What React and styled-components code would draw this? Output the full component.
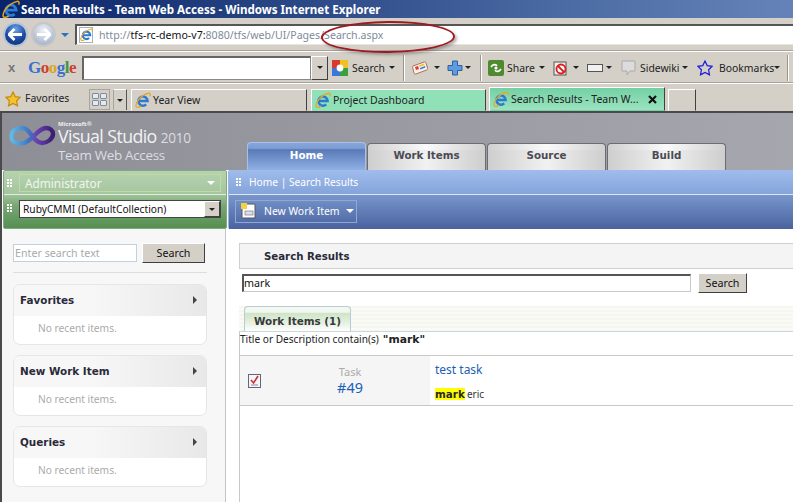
import styled, { createGlobalStyle } from "styled-components";

const Global = createGlobalStyle`
  html, body { margin: 0; padding: 0; background: #fff; }
  body { width: 793px; height: 502px; overflow: hidden; font-family: "Noto Sans", "Liberation Sans", sans-serif; font-size: 10.4px; color: #222; }
  * { box-sizing: border-box; }
`;

const Window = styled.div`
  position: relative;
  width: 793px;
  height: 502px;
  overflow: hidden;
  display: flex;
  flex-direction: column;
`;

/* title bar */
const TitleBar = styled.div`
  height: 18px;
  display: flex;
  align-items: center;
  gap: 1px;
  padding-left: 2px;
  background: linear-gradient(90deg, #0a246a 0%, #23407f 30%, #4a6aa3 70%, #6583b8 100%);
  color: #fff;
  font: bold 11.6px "Noto Sans", sans-serif;
  white-space: nowrap;
`;

/* address row */
const AddressRow = styled.div`
  height: 34px;
  background: #d4d0c8;
  border-bottom: 1px solid #fff;
  box-shadow: inset 0 -1px 0 #a8a49c;
  display: flex;
  align-items: center;
  padding: 0 0 0 3px;
`;
const NavButton = styled.div`
  width: 25px;
  height: 25px;
  flex: none;
  border-radius: 50%;
  margin-left: ${(p) => p.$ml || 0}px;
  display: flex;
  align-items: center;
  justify-content: center;
  background: ${(p) => p.$off
    ? "radial-gradient(circle at 50% 30%, #eef1f7, #a9b5cc 80%)"
    : "radial-gradient(circle at 50% 25%, #6ea2e4, #1a49a0 55%, #12306f 90%)"};
  border: 2px solid ${(p) => (p.$off ? "#c6c6c6" : "#b4c2da")};
`;
const DropArrow = styled.div`
  width: 0;
  height: 0;
  margin: ${(p) => p.$m || "0 0 0 4px"};
  border-left: ${(p) => p.$w || 3}px solid transparent;
  border-right: ${(p) => p.$w || 3}px solid transparent;
  border-top: ${(p) => p.$w || 3}px solid ${(p) => p.$c || "#222"};
  flex: none;
`;
const AddressField = styled.div`
  flex: 1;
  height: 21px;
  margin-left: 6px;
  margin-bottom: 1px;
  background: #fff;
  border-top: 2px solid #555;
  border-left: 2px solid #555;
  border-bottom: 1px solid #e8e6e0;
  display: flex;
  align-items: center;
  padding-left: 2px;
  white-space: nowrap;
  font-size: 10.6px;
  color: #7f8a9a;
`;
const PageIcon = styled.div`
  width: 14px;
  height: 16px;
  margin-right: 6px;
  border: 1px solid #a8b0bc;
  display: flex;
  align-items: center;
  justify-content: center;
  flex: none;
`;
const Host = styled.span`
  color: #111;
`;
const Annotation = styled.div`
  position: absolute;
  left: 321px;
  top: 21px;
  width: 134px;
  height: 32px;
  border: 2px solid #a01820;
  border-radius: 50%;
  box-shadow: 2px 2px 3px rgba(80, 80, 80, 0.45);
  transform: rotate(-0.5deg);
`;

/* google toolbar */
const GoogleRow = styled.div`
  height: 32px;
  background: #d4d0c8;
  border-bottom: 1px solid #fff;
  box-shadow: inset 0 -1px 0 #a8a49c;
  display: flex;
  align-items: center;
  padding-left: 8px;
  white-space: nowrap;
  color: #222;
  font-size: 10.4px;
`;
const CloseX = styled.span`
  width: 20px;
  flex: none;
  color: #777;
  font: bold 13px "Liberation Sans", sans-serif;
`;
const GoogleLogo = styled.span`
  width: 54px;
  flex: none;
  font: bold 17px "Liberation Serif", serif;
  letter-spacing: -0.5px;
`;
const GoogleLetter = styled.span`
  color: ${(p) => p.$c};
`;
const GoogleInput = styled.div`
  width: 229px;
  height: 24px;
  flex: none;
  background: #fff;
  border: 1px solid #888;
  border-top: 2px solid #666;
  border-left: 2px solid #666;
`;
const ComboButton = styled.div`
  width: ${(p) => p.$w}px;
  height: ${(p) => p.$h}px;
  background: #d4d0c8;
  border: 1px solid;
  border-color: #fff #404040 #404040 #fff;
  display: flex;
  align-items: center;
  justify-content: center;
  flex: none;
`;
const ToolLabel = styled.span`
  flex: none;
  width: ${(p) => p.$w}px;
  margin-left: ${(p) => p.$ml || 4}px;
`;
const ToolIcon = styled.svg`
  flex: none;
  margin-left: ${(p) => p.$ml || 0}px;
`;
const ToolSep = styled.div`
  width: 1px;
  height: 26px;
  background: #9a968e;
  box-shadow: 1px 0 0 #fff;
  margin-left: ${(p) => p.$ml}px;
  flex: none;
`;

/* tab row */
const TabRow = styled.div`
  height: 29px;
  background: #d4d0c8;
  border-bottom: 2px solid #4a4a4a;
  display: flex;
  align-items: flex-end;
  padding-left: 5px;
  white-space: nowrap;
`;
const FavStar = styled.div`
  align-self: center;
  margin-top: 2px;
  display: flex;
  flex: none;
`;
const FavLabel = styled.span`
  align-self: center;
  margin: 0 0 0 4px;
  width: 64px;
  flex: none;
`;
const GridButton = styled.div`
  align-self: center;
  width: 21px;
  height: 21px;
  margin-top: 4px;
  flex: none;
  border: 1px solid #a8a49c;
  display: grid;
  grid-template-columns: 7px 7px;
  grid-template-rows: 6px 6px;
  gap: 1px;
  justify-content: center;
  align-content: center;
`;
const GridCell = styled.i`
  display: block;
  background: #e4e8f0;
  border: 1px solid #7f8a9a;
  border-radius: 1px;
`;
const ListButton = styled.div`
  align-self: center;
  width: 14px;
  height: 21px;
  margin: 4px 0 0 3px;
  flex: none;
  border-right: 1px solid #555;
  border-left: 1px solid #a8a49c;
  border-top: 1px solid #fff;
  display: flex;
  align-items: center;
  justify-content: center;
`;
const BrowserTab = styled.div`
  width: ${(p) => p.$w}px;
  height: ${(p) => (p.$active ? 24 : 22)}px;
  margin-left: ${(p) => p.$ml}px;
  padding-left: 3px;
  flex: none;
  display: flex;
  align-items: center;
  gap: 2px;
  border: 1px solid;
  border-color: #fff #404040 transparent #fff;
  background: ${(p) => p.$bg};
  font-size: 10.5px;
  color: #222;
`;
const TabClose = styled.svg`
  margin-left: auto;
  margin-right: 7px;
  flex: none;
`;

/* page header */
const PageHead = styled.div`
  height: 57px;
  background: linear-gradient(90deg, #8e8e96, #a6a6ae);
  border-left: 2px solid #4a4a4a;
  display: flex;
  justify-content: space-between;
  position: relative;
`;
const LogoBlock = styled.div`
  display: flex;
  padding: 8px 0 0 7px;
  color: #f2f2f4;
  width: 245px;
  flex: none;
`;
const LogoMark = styled.svg`
  flex: none;
  margin: 4px 2px 0 0;
`;
const LogoText = styled.div`
  font-family: "Open Sans", sans-serif;
  display: flex;
  flex-direction: column;
`;
const LogoSmall = styled.div`
  font: bold 6px/7px "Open Sans", sans-serif;
`;
const LogoBig = styled.div`
  font: 400 17.8px/17px "Open Sans", sans-serif;
  letter-spacing: -0.6px;
  white-space: nowrap;
`;
const LogoYear = styled.span`
  font-size: 13.6px;
  letter-spacing: -0.3px;
  margin-left: 4px;
  color: #dcdce0;
`;
const LogoSub = styled.div`
  font: 400 13.4px/18px "Open Sans", sans-serif;
  letter-spacing: -0.3px;
  color: #dedee2;
  white-space: nowrap;
`;
const NavTabs = styled.div`
  flex: 1;
  display: flex;
  align-items: flex-end;
  gap: 1px;
`;
const NavTab = styled.div`
  width: 119px;
  height: ${(p) => (p.$active ? 28 : 27)}px;
  border-radius: 4px 4px 0 0;
  border: 1px solid ${(p) => (p.$active ? "#a9c1e8" : "#6c6c72")};
  border-bottom: none;
  display: flex;
  align-items: center;
  justify-content: center;
  padding-bottom: 4px;
  font: bold 10.3px "DejaVu Sans", sans-serif;
  color: ${(p) => (p.$active ? "#fff" : "#4b4b55")};
  background: ${(p) => p.$active
    ? "linear-gradient(180deg, #86a6db 0%, #7c9cd4 20%, #5a7ab8 25%, #8fb0e4 100%)"
    : "linear-gradient(90deg, rgba(205,205,205,.9), rgba(255,255,255,.65) 50%, rgba(205,205,205,.9)), linear-gradient(180deg, #f0f0f0 0 25%, #d6d6d6 25% 100%)"};
`;

/* command panels */
const Panels = styled.div`
  display: flex;
  height: 59px;
  border-left: 2px solid #4a4a4a;
`;
const GreenPanel = styled.div`
  width: 224px;
  margin-left: 1px;
  flex: none;
  display: flex;
  flex-direction: column;
  border: 1px solid #7fa97f;
  background: linear-gradient(180deg, #b6d2b0 0%, #a4c69e 40%, #79a774 60%, #558f52 100%);
  border-radius: 2px;
`;
const GreenTop = styled.div`
  height: 24px;
  display: flex;
  align-items: center;
  padding-left: 3px;
  border-bottom: 1px solid #e1ecdc;
`;
const GreenBottom = styled.div`
  flex: 1;
  display: flex;
  padding: 5px 0 0 3px;
`;
const Grip = styled.div`
  width: 5px;
  height: 8px;
  flex: none;
  margin-top: ${(p) => p.$mt || 0}px;
  background-image: radial-gradient(circle at 1px 1px, #fff 1px, transparent 1px);
  background-size: 3px 3px;
`;
const UserBox = styled.div`
  width: 202px;
  height: 18px;
  margin-left: 7px;
  border: 1px solid #c2d8a8;
  display: flex;
  align-items: center;
  justify-content: space-between;
  padding: 0 5px;
  color: #f0f7ea;
  font-size: 11.8px;
`;
const Select = styled.div`
  width: 202px;
  height: 18px;
  margin-left: 7px;
  background: #fff;
  border: 1px solid #444;
  display: flex;
  align-items: center;
  justify-content: space-between;
  padding-left: 3px;
  font-size: 10.2px;
  color: #111;
  white-space: nowrap;
`;
const BluePanel = styled.div`
  flex: 1;
  margin-left: 1px;
  display: flex;
  flex-direction: column;
  border-radius: 2px 0 0 2px;
  border-left: 1px solid #9ab4e0;
  box-shadow: inset 0 -1px 0 #39528a;
`;
const Crumbs = styled.div`
  height: 25px;
  display: flex;
  align-items: center;
  padding-left: 7px;
  color: #fff;
  font-size: 10.2px;
  background: linear-gradient(180deg, #a0bced, #84a4da);
  border-bottom: 1px solid #dfe7f5;
`;
const CrumbText = styled.span`
  margin-left: 8px;
`;
const CommandBar = styled.div`
  flex: 1;
  display: flex;
  align-items: center;
  padding-left: 6px;
  background: linear-gradient(180deg, #7896cc, #4a639f);
`;
const NewButton = styled.div`
  width: 122px;
  height: 23px;
  margin-top: -2px;
  border: 1px solid #8fa8d8;
  display: flex;
  align-items: center;
  color: #fff;
  font-size: 10.4px;
  padding-left: 5px;
  gap: 8px;
  white-space: nowrap;
`;

/* content */
const Body = styled.div`
  flex: 1;
  display: flex;
  border-left: 2px solid #4a4a4a;
  min-height: 0;
`;
const Sidebar = styled.div`
  width: 224px;
  flex: none;
  background: #f7f7f7;
  border-right: 1px solid #c4c4c4;
  padding: 14px 0 0 11px;
`;
const SearchLine = styled.div`
  display: flex;
  align-items: center;
  height: 20px;
  margin-bottom: 9px;
`;
const SearchBox = styled.div`
  width: 124px;
  height: 18px;
  flex: none;
  background: #fff;
  border: 1px solid #c0d0e0;
  color: #aaa;
  font-size: 10.7px;
  line-height: 16px;
  padding-left: 1px;
`;
const SearchButton = styled.div`
  width: ${(p) => p.$w}px;
  height: 20px;
  margin-left: ${(p) => p.$ml}px;
  background: #d4d0c8;
  border: 1px solid;
  border-color: #fff #404040 #404040 #fff;
  display: flex;
  align-items: center;
  justify-content: center;
  font-size: 10.7px;
  color: #111;
  flex: none;
`;
const SideRule = styled.div`
  width: 194px;
  height: 1px;
  background: #dedede;
  margin-bottom: 11px;
`;
const Card = styled.div`
  width: 194px;
  height: 61px;
  margin-bottom: 10px;
  background: #fff;
  border: 1px solid #e6e6e6;
  border-radius: 7px;
  overflow: hidden;
`;
const CardHead = styled.div`
  height: 31px;
  display: flex;
  align-items: center;
  justify-content: space-between;
  padding: 0 9px 2px 6px;
  background: linear-gradient(90deg, #f7f7f7 40%, #e8e8e8 100%);
  font: bold 10.4px "DejaVu Sans", sans-serif;
  color: #2a2a3a;
`;
const CardArrow = styled.div`
  width: 0;
  height: 0;
  border-top: 4px solid transparent;
  border-bottom: 4px solid transparent;
  border-left: 4px solid #444;
`;
const CardBody = styled.div`
  padding: 5px 0 0 24px;
  color: #aaa;
  font-size: 10.2px;
`;
const Main = styled.div`
  flex: 1;
  display: flex;
  flex-direction: column;
  padding: 14px 0 0 13px;
  min-width: 0;
`;
const ResultsHead = styled.div`
  height: 26px;
  flex: none;
  background: #f4f4f4;
  border: 1px solid #cfcfcf;
  border-right: none;
  display: flex;
  align-items: center;
  padding-left: 24px;
  font: bold 10.2px "DejaVu Sans", sans-serif;
  color: #2a2a3a;
`;
const QueryLine = styled.div`
  display: flex;
  align-items: center;
  margin: 4px 0 0 3px;
`;
const QueryInput = styled.div`
  width: 449px;
  height: 18px;
  flex: none;
  background: #fff;
  border: 1px solid #c8c8c8;
  border-top: 2px solid #555;
  border-left: 2px solid #555;
  font-size: 10.7px;
  line-height: 15px;
  color: #111;
`;
const TabStrip = styled.div`
  height: 25px;
  flex: none;
  margin-top: 13px;
  display: flex;
  align-items: flex-end;
  padding-left: 5px;
  background: repeating-linear-gradient(180deg, #f5f6f0 0 2px, #fafbf6 2px 4px);
`;
const ResultTab = styled.div`
  width: 107px;
  height: 25px;
  padding-top: 4px;
  border: 1px solid #b6cbd6;
  border-bottom: none;
  border-radius: 4px 4px 0 0;
  background: linear-gradient(180deg, #f4f8f2 0%, #f0f6ee 22%, #cfe4c8 26%, #e8f2e4 70%, #fff 100%);
  display: flex;
  align-items: center;
  justify-content: center;
  font: bold 10.4px "DejaVu Sans", sans-serif;
  color: #3a3a3a;
`;
const ResultPanel = styled.div`
  flex: 1;
  border-left: 1px solid #c8c8c8;
  border-top: 1px solid #c8d8e0;
`;
const Criteria = styled.div`
  height: 24px;
  display: flex;
  align-items: flex-start;
  font-size: 10.1px;
  line-height: 15px;
  color: #222;
  border-bottom: 1px solid #c8c8c8;
`;
const Quoted = styled.b`
  font: bold 10.8px/15px "DejaVu Sans", sans-serif;
  margin-left: 4px;
`;
const ResultRow = styled.div`
  height: 50px;
  display: flex;
  border-bottom: 1px solid #c8c8c8;
`;
const ResultLeft = styled.div`
  width: 190px;
  background: #f5f5f5;
  display: flex;
  align-items: center;
  padding-left: 8px;
  flex: none;
`;
const TaskId = styled.div`
  margin-left: 67px;
  text-align: center;
  width: 44px;
  margin-top: -1px;
`;
const TaskType = styled.div`
  color: #aaa;
  font-size: 11px;
  line-height: 16px;
`;
const TaskNum = styled.div`
  color: #1a5fb4;
  font-size: 14.4px;
  line-height: 16px;
`;
const ResultRight = styled.div`
  padding: 5px 0 0 5px;
`;
const ResultTitle = styled.div`
  color: #1a5fb4;
  font-size: 12px;
  line-height: 17px;
  margin-bottom: 10px;
`;
const Snippet = styled.div`
  font-size: 10px;
  line-height: 12px;
  color: #333;
`;
const Hit = styled.b`
  background: #ffff00;
  font: bold 10.4px/12px "DejaVu Sans", sans-serif;
  margin-right: 2px;
  color: #2a2a2a;
`;

function IeIcon({ size = 16 }) {
  return (
    <ToolIcon width={size} height={size} viewBox="0 0 16 16">
      <path d="M4 9h8.6a4.6 4.6 0 1 0-1.4 3.4" fill="none" stroke="#2d7ad0" strokeWidth="2.5" />
      <path d="M1 14.5C.4 10 6 3 13.5 1.2c2-.2 2 1.6 1.2 3M1 14.5c.8 1.4 3 1 5-.4" fill="none" stroke="#e8a820" strokeWidth="1.3" />
    </ToolIcon>
  );
}

function Star({ color = "#f2c230", line = "#c98a10", size = 16, ml }) {
  return (
    <ToolIcon $ml={ml} width={size} height={size} viewBox="0 0 16 16">
      <path d="M8 1l2.2 4.6 5 .7-3.6 3.5.9 5L8 12.4 3.5 14.8l.9-5L.8 6.3l5-.7z" fill={color} stroke={line} strokeWidth="1.2" />
    </ToolIcon>
  );
}

export default function App() {
  return (
    <Window>
      <Global />
      <TitleBar>
        <IeIcon size={18} />
        Search Results - Team Web Access - Windows Internet Explorer
      </TitleBar>

      <AddressRow>
        <NavButton>
          <svg width="15" height="13" viewBox="0 0 15 13"><path d="M6.5 1L1 6.5 6.5 12M1.5 6.5H14" fill="none" stroke="#fff" strokeWidth="2.8" /></svg>
        </NavButton>
        <NavButton $off $ml={3}>
          <svg width="15" height="13" viewBox="0 0 15 13"><path d="M8.5 1L14 6.5 8.5 12M13.5 6.5H1" fill="none" stroke="#fff" strokeWidth="2.8" /></svg>
        </NavButton>
        <DropArrow $w={4} $c="#2f6fc0" $m="0 0 0 5px" />
        <AddressField>
          <PageIcon><IeIcon size={13} /></PageIcon>
          http://<Host>tfs-rc-demo-v7:</Host>8080/tfs/web/UI/Pages/Search.aspx
        </AddressField>
      </AddressRow>

      <GoogleRow>
        <CloseX>x</CloseX>
        <GoogleLogo>
          <GoogleLetter $c="#3a6fd0">G</GoogleLetter>
          <GoogleLetter $c="#d04030">o</GoogleLetter>
          <GoogleLetter $c="#d8a820">o</GoogleLetter>
          <GoogleLetter $c="#3a6fd0">g</GoogleLetter>
          <GoogleLetter $c="#3a9a40">l</GoogleLetter>
          <GoogleLetter $c="#d04030">e</GoogleLetter>
        </GoogleLogo>
        <GoogleInput />
        <ComboButton $w={17} $h={24}><DropArrow $m="0" /></ComboButton>
        <ToolIcon $ml={4} width="16" height="16" viewBox="0 0 16 16">
          <rect width="8" height="8" fill="#d83a2a" />
          <rect x="8" width="8" height="8" fill="#f2c020" />
          <rect y="8" width="8" height="8" fill="#3a78d8" />
          <rect x="8" y="8" width="8" height="8" fill="#3aa040" />
          <circle cx="8" cy="8" r="3.4" fill="#fff" />
        </ToolIcon>
        <ToolLabel $w={33}>Search</ToolLabel>
        <DropArrow />
        <ToolSep $ml={8} />
        <ToolIcon $ml={8} width="16" height="16" viewBox="0 0 16 16">
          <path d="M1 6l11-4c1-.3 1.6 0 2 1l1.6 5c.3 1 0 1.5-1 2L4 14c-1 .3-1.5 0-2-1L.6 7.5C.4 7 .5 6.3 1 6z" fill="#f4f0e6" stroke="#a87060" />
          <path d="M3 7l3-1 1 3-3 1z" fill="#e03a3a" />
          <path d="M7 5.5l5-2 .5 1.5-5 2z" fill="#f2c020" />
          <path d="M8 8l5-2 .4 1.4-5 2z" fill="#3a78d8" />
        </ToolIcon>
        <DropArrow $m="0 0 0 6px" />
        <ToolIcon $ml={7} width="16" height="16" viewBox="0 0 16 16">
          <path d="M5.5 1h5v4.5H15v5h-4.5V15h-5v-4.5H1v-5h4.5z" fill="#5f9be0" stroke="#2f5fa0" />
        </ToolIcon>
        <DropArrow $m="0 0 0 2px" />
        <ToolSep $ml={9} />
        <ToolIcon $ml={7} width="16" height="16" viewBox="0 0 16 16">
          <rect width="16" height="16" rx="2" fill="#4f8a30" />
          <path d="M3 7c2-3 5-3 6-1M13 9c-2 3-5 3-6 1" fill="none" stroke="#fff" strokeWidth="1.6" />
          <circle cx="8" cy="8" r="1.6" fill="#fff" />
        </ToolIcon>
        <ToolLabel $ml={3} $w={28}>Share</ToolLabel>
        <DropArrow />
        <ToolIcon $ml={8} width="16" height="16" viewBox="0 0 16 16">
          <rect x="1" y="2" width="12" height="13" fill="#eee" stroke="#555" />
          <circle cx="8" cy="9" r="4.5" fill="#fff" stroke="#d82020" strokeWidth="1.8" />
          <path d="M5 6l6 6" stroke="#d82020" strokeWidth="1.8" />
        </ToolIcon>
        <DropArrow $m="0 0 0 4px" />
        <ToolIcon $ml={8} width="16" height="8" viewBox="0 0 16 8">
          <rect x=".5" y=".5" width="15" height="7" fill="#f0f0f0" stroke="#555" />
        </ToolIcon>
        <DropArrow $m="0 0 0 3px" />
        <ToolIcon $ml={9} width="15" height="16" viewBox="0 0 15 16">
          <path d="M1 1h13v10H9l-3 4v-4H1z" fill="#dcdcdc" stroke="#aaa" />
        </ToolIcon>
        <ToolLabel $ml={4} $w={37}>Sidewiki</ToolLabel>
        <DropArrow $m="0 0 0 5px" />
        <Star color="none" line="#1a1ae0" ml={9} />
        <ToolLabel $ml={6} $w={51}>Bookmarks</ToolLabel>
        <DropArrow />
        <ToolSep $ml={7} />
      </GoogleRow>

      <TabRow>
        <FavStar><Star /></FavStar>
        <FavLabel>Favorites</FavLabel>
        <GridButton><GridCell /><GridCell /><GridCell /><GridCell /></GridButton>
        <ListButton><DropArrow $m="0" /></ListButton>
        <BrowserTab $w={176} $ml={4} $bg="#d4d0c8"><IeIcon />Year View</BrowserTab>
        <BrowserTab $w={175} $ml={4} $bg="#90e0b8"><IeIcon />Project Dashboard</BrowserTab>
        <BrowserTab $w={176} $ml={3} $active $bg="linear-gradient(180deg, #74d0a4, #9ae4c0)">
          <IeIcon />Search Results - Team W...
          <TabClose width="9" height="9" viewBox="0 0 9 9">
            <path d="M1 1l7 7M8 1L1 8" stroke="#111" strokeWidth="2.2" />
          </TabClose>
        </BrowserTab>
        <BrowserTab $w={28} $ml={3} $bg="#d4d0c8" />
      </TabRow>

      <PageHead>
        <LogoBlock>
          <LogoMark width="47" height="21" viewBox="0 0 47 21">
            <defs>
              <linearGradient id="inf" x1="0" x2="1">
                <stop offset="0" stopColor="#62b8e4" />
                <stop offset=".4" stopColor="#3f78c4" />
                <stop offset=".62" stopColor="#6a3fb0" />
                <stop offset="1" stopColor="#3a1f70" />
              </linearGradient>
            </defs>
            <path d="M14 3C6 3 2.5 7 2.5 11.5c0 5 4.500 7 9.500 7C22 18.500 28 3 37 3c4 0 7 2.500 7 6 0 5-6 9-11 9-9 0-12-15-19-15z" fill="none" stroke="url(#inf)" strokeWidth="4.4" />
          </LogoMark>
          <LogoText>
            <LogoSmall>Microsoft®</LogoSmall>
            <LogoBig>Visual Studio<LogoYear>2010</LogoYear></LogoBig>
            <LogoSub>Team Web Access</LogoSub>
          </LogoText>
        </LogoBlock>
        <NavTabs>
          <NavTab $active>Home</NavTab>
          <NavTab>Work Items</NavTab>
          <NavTab>Source</NavTab>
          <NavTab>Build</NavTab>
        </NavTabs>
      </PageHead>

      <Panels>
        <GreenPanel>
          <GreenTop>
            <Grip />
            <UserBox>Administrator<DropArrow $w={4} $c="#fff" /></UserBox>
          </GreenTop>
          <GreenBottom>
            <Grip $mt={4} />
            <Select>
              RubyCMMI (DefaultCollection)
              <ComboButton $w={16} $h={16}><DropArrow $m="0" /></ComboButton>
            </Select>
          </GreenBottom>
        </GreenPanel>
        <BluePanel>
          <Crumbs><Grip /><CrumbText>Home | Search Results</CrumbText></Crumbs>
          <CommandBar>
            <NewButton>
              <svg width="15" height="16" viewBox="0 0 15 16">
                <path d="M4 1h10v14H1V6z" fill="#fff" stroke="#556" />
                <rect x="0" y="0" width="6" height="6" fill="#f2d040" />
                <rect x="4" y="8" width="8" height="4" fill="#dde" stroke="#667" strokeWidth=".6" />
              </svg>
              New Work Item
              <DropArrow $w={4} $c="#fff" $m="0 0 0 -2px" />
            </NewButton>
          </CommandBar>
        </BluePanel>
      </Panels>

      <Body>
        <Sidebar>
          <SearchLine>
            <SearchBox>Enter search text</SearchBox>
            <SearchButton $w={63} $ml={5}>Search</SearchButton>
          </SearchLine>
          <SideRule />
          {["Favorites", "New Work Item", "Queries"].map((name) => (
            <Card key={name}>
              <CardHead>{name}<CardArrow /></CardHead>
              <CardBody>No recent items.</CardBody>
            </Card>
          ))}
        </Sidebar>
        <Main>
          <ResultsHead>Search Results</ResultsHead>
          <QueryLine>
            <QueryInput>mark</QueryInput>
            <SearchButton $w={49} $ml={7}>Search</SearchButton>
          </QueryLine>
          <TabStrip><ResultTab>Work Items (1)</ResultTab></TabStrip>
          <ResultPanel>
            <Criteria>Title or Description contain(s)<Quoted>"mark"</Quoted></Criteria>
            <ResultRow>
              <ResultLeft>
                <svg width="13" height="15" viewBox="0 0 13 15">
                  <rect x=".5" y="1.5" width="12" height="13" fill="#f4f4fa" stroke="#667" />
                  <path d="M3 7l2.5 3L10 3" fill="none" stroke="#d03030" strokeWidth="1.6" />
                  <path d="M3 12h7" stroke="#889" />
                </svg>
                <TaskId>
                  <TaskType>Task</TaskType>
                  <TaskNum>#49</TaskNum>
                </TaskId>
              </ResultLeft>
              <ResultRight>
                <ResultTitle>test task</ResultTitle>
                <Snippet><Hit>mark</Hit>eric</Snippet>
              </ResultRight>
            </ResultRow>
          </ResultPanel>
        </Main>
      </Body>
      <Annotation />
    </Window>
  );
}
